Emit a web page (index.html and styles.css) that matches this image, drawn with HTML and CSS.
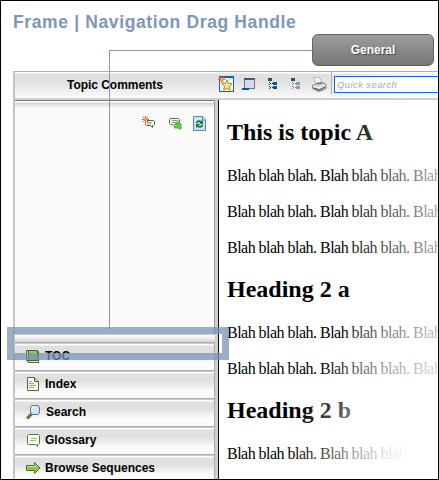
FILE: index.html
```html
<!DOCTYPE html>
<html lang="en">
<head>
<meta charset="utf-8">
<title>Frame | Navigation Drag Handle</title>
<link rel="stylesheet" href="styles.css">
</head>
<body>
<div class="page">
  <h1 class="title"><span>Frame | Navigation Drag Handle</span></h1>
  <div class="app">
    <header class="toolbar">
      <div class="pane-title"><span>Topic Comments</span></div>
      <div class="tools">
        <svg class="star" width="17" height="17" viewBox="0 0 17 17"><rect x="1.5" y="1.5" width="14" height="14" fill="#f3f7fa" stroke="#176795"/><path d="M2 2h13v2H2z" fill="#d6e8f5"/><path d="M1 1h15" stroke="#176795" stroke-width="2"/><path d="m9 4 1.5 3.4 3.6.3-2.7 2.6.8 3.9L9 12.1l-3.3 2.1.8-3.9-2.7-2.6 3.7-.3z" fill="#ffe29a" stroke="#b78a32"/><path d="M3.5 0v7M0 3.5h7M1 1l5 5M1 6l5-5" stroke="#ed4d18"/><circle cx="3.5" cy="3.5" r="1.7" fill="#ffb321"/></svg>
        <svg class="win" width="14" height="14" viewBox="0 0 14 14"><rect x="2.5" y="1.5" width="10" height="9" fill="#d3daea" stroke="#747783"/><path d="M2 1h11" stroke="#315e83" stroke-width="2"/><path d="M0 10h7v2H0z" fill="#075b8c"/></svg>
        <svg class="tree" width="10" height="12" viewBox="0 0 10 12"><path d="M0 0h4v3H0zM5 4h4v3H5zM5 8h4v3H5z" fill="#075b8c"/><path d="M1.5 4v7M2 5.5h3M2 9.5h3" fill="none" stroke="#333" stroke-dasharray="1 1"/></svg>
        <svg class="tree" width="10" height="12" viewBox="0 0 10 12"><path d="M0 0h4v3H0z" fill="#075b8c"/><path d="M5 4h4v3H5zM5 8h4v3H5z" fill="#999"/><path d="M1.5 4v7M2 5.5h3M2 9.5h3" fill="none" stroke="#888" stroke-dasharray="1 1"/></svg>
        <svg class="printer" width="15" height="15" viewBox="0 0 15 15"><path d="m1.5.5 6 0 3 6-6 1z" fill="#eef6ff" stroke="#a9c0dc"/><path d="m.5 8.500 4-2 6-1 3.500 2v4l-7 3-6.500-3z" fill="#d4d4d4" stroke="#777"/><path d="m1 9 6 2 6.500-3" fill="none" stroke="#fff"/><path d="m2 11 5 2 6-3" fill="none" stroke="#444"/><path d="m5 7 5-1" stroke="#555"/></svg>
        <div class="search">Quick search</div>
      </div>
    </header>
    <div class="main">
      <aside class="side">
        <div class="comments">
          <svg width="14" height="14" viewBox="0 0 14 14"><path d="M3.500 4.500h8l1 1v3l-1 1h-1v2l-2-2h-4l-1-1z" fill="#fff" stroke="#50634c"/><path d="M5 6.500h5M5 8h4" stroke="#8bac73"/><path d="M3.500 0v7M0 3.500h7M1 1l5 5M1 6l5-5" stroke="#e95822"/><circle cx="3.500" cy="3.500" r="1.500" fill="#ffad25"/></svg>
          <svg class="reply" width="14" height="14" viewBox="0 0 14 14"><path d="M1.500 2.500h8l1 1v4l-1 1h-4l-1 1-1-1h-2l-1-1v-4z" fill="#fff" stroke="#54744c"/><path d="M3 4.500h6M3 6.500h5" stroke="#71b34c"/><path d="M9.500 5.500 12 8v5h-1.500l-1-1h-4v-2h3V8h-2z" fill="#5dd540" stroke="#4cad37"/></svg>
          <svg class="refresh" width="14" height="16" viewBox="0 0 14 16"><path d="M.5.500h9l3 3v11H.5z" fill="#c9e3fa" stroke="#5a82b5"/><path d="M9.500 1v3h3" fill="#fff" stroke="#5a82b5"/><path d="M3.500 7c1-2 3-2.500 5-1M9.500 9c-1 2-3 2.500-5 1" fill="none" stroke="#137d29" stroke-width="1.800"/><path d="M10 4v4H6zM3 12V8h4z" fill="#137d29"/></svg>
        </div>
        <div class="handle"></div>
        <nav>
          <div class="item"><svg width="15" height="15" viewBox="0 0 15 15"><path d="M.5 1.500h2v11h-1l-1-1z" fill="#dce8cf" stroke="#3b6728"/><path d="M2.500 1.500h9v10h-9z" fill="#87ce56" stroke="#3b6728"/><path d="M11.500 2.500h1v11h-10l-1-2h10z" fill="#e4eddc" stroke="#3b6728"/></svg><span class="l1">TOC</span></div>
          <div class="item"><svg width="15" height="15" viewBox="0 0 15 15"><path d="M1.500.500h7l4 4v9h-11z" fill="#fafff7" stroke="#54654d"/><path d="M8.500 1v3.500h4" fill="#dbe8d4" stroke="#3f6d26"/><path d="M3 4.500h3M3 6.500h5M3 8.500h7M3 10.500h5" stroke="#80bd56"/></svg><span class="l2">Index</span></div>
          <div class="item"><svg width="15" height="15" viewBox="0 0 15 15"><path d="M6 8.500 1 13.500" stroke="#3f6425" stroke-width="3"/><path d="m5.500 9-4 4" stroke="#81b54c"/><rect x="4.500" y=".5" width="9" height="9" rx="2.500" fill="#c4e8ff" stroke="#66727a"/><path d="M6 5V2h4" fill="none" stroke="#fff"/></svg><span class="l3">Search</span></div>
          <div class="item"><svg width="15" height="15" viewBox="0 0 15 15"><path d="M2.500 1.500h10l1 1v8l-1 1h-1v2l-2-2h-7l-1-1v-8z" fill="#fafff7" stroke="#547148"/><path d="M5 5.500h6M4 7.500h6" stroke="#8acb62"/></svg><span class="l4">Glossary</span></div>
          <div class="item"><svg width="15" height="15" viewBox="0 0 15 15"><path d="M.5 4.500h8v-3l5.500 5.500-5.500 5.500v-3h-8z" fill="#8ac84b" stroke="#4c742c"/><path d="M1.500 5.500h8v-2" fill="none" stroke="#c3e89a"/></svg><span class="l5">Browse Sequences</span></div>
        </nav>
      </aside>
      <main class="content">
        <h2>This is topic A</h2>
        <p>Blah blah blah. Blah blah blah. Blah</p>
        <p>Blah blah blah. Blah blah blah. Blah</p>
        <p>Blah blah blah. Blah blah blah. Blah</p>
        <h2>Heading 2 a</h2>
        <p>Blah blah blah. Blah blah blah. Blah</p>
        <p>Blah blah blah. Blah blah blah. Blah</p>
        <h2>Heading 2 b</h2>
        <p>Blah blah blah. Blah blah blah</p>
      </main>
    </div>
  </div>
  <div class="connector"></div>
  <div class="callout">General</div>
  <div class="marker"></div>
</div>
</body>
</html>
```
FILE: styles.css
```css
* { box-sizing: border-box; }
body { margin: 0; font-family: "Liberation Sans", Arial, sans-serif; overflow: hidden; }
.page { position: relative; width: 439px; height: 480px; border: 1px solid #000; background: #fff; overflow: hidden; display: flex; flex-direction: column; }
.title { margin: 0; height: 70px; flex: none; padding: 11px 0 0 12px; font-size: 17.5px; line-height: 20px; color: #8096b5; white-space: nowrap; letter-spacing: 0.63px; }
.app { margin-left: 12px; height: 408px; flex: none; border-left: 2px solid #c3c7c3; display: flex; flex-direction: column; overflow: hidden; }
.toolbar { height: 29px; flex: none; display: flex; border-top: 1px solid #a9afa9; border-bottom: 2px solid #d0d0d0; background: linear-gradient(#fff 0 1px, #e0e0e0 2px 9px, #fafafa 100%); }
.pane-title { width: 203px; padding: 6px 3px 0 0; text-align: center; font-size: 12px; line-height: 15px; font-weight: bold; letter-spacing: -0.05px; }
.tools { flex: 1; display: flex; align-items: flex-start; background: linear-gradient(90deg, transparent 100px, rgba(255, 255, 255, 0.8)); }
.tools svg { flex: none; }
.star { margin-top: 4px; }
.win { margin: 6px 0 0 7px; }
.tree { margin: 6px 0 0 13px; }
.win + .tree { margin-left: 12px; }
.printer { margin: 5px 0 0 11px; }
.search { margin: 4px 0 0 7px; flex: 1; height: 17px; border: 1px solid #1760e8; border-right: 0; background: #fff; font-size: 9.5px; line-height: 15px; font-style: italic; color: #aaa; padding-left: 2px; white-space: nowrap; letter-spacing: 0.4px; position: relative; }
.search::before { content: ""; position: absolute; left: -4px; top: -5px; width: 1px; height: 22px; background: #b4b4b4; }
.main { flex: 1; min-height: 0; display: flex; }
.side { width: 204px; flex: none; border-right: 1px solid #111; box-shadow: inset -3px 0 #cfcfcf; padding-right: 3px; overflow: hidden; }
.comments { height: 234px; border-top: 1px solid #777; border-right: 1px solid #999; background: linear-gradient(#fff 0 1px, #d4d4d4 2px, #fafafa 7px); display: flex; justify-content: flex-end; padding: 15px 7px 0 0; }
.comments svg { display: block; }
.reply { margin-left: 13px; }
.refresh { margin-left: 10px; }
.handle { height: 8px; border-top: 1px solid #c7cac7; background: linear-gradient(#fff, #d4d4d4); }
.item { height: 28px; border-top: 1px solid #a9aea9; border-right: 1px solid #aaa; padding: 0 0 1px 11px; display: flex; align-items: center; gap: 4px; background: linear-gradient(#c8ccc8 0 1px, #fff 1px 2px, #e0e0e0 3px 10px, #fcfcfc 20px); font-size: 12px; font-weight: bold; white-space: nowrap; }
.item svg { flex: none; }
.l3 { padding-left: 1px; }
.content { flex: 1; min-width: 0; position: relative; overflow: hidden; background: #fff; padding: 18px 0 0 8px; font-family: "Liberation Serif", "Times New Roman", serif; }
.content::after { content: ""; position: absolute; inset: 0; background: radial-gradient(ellipse 150px 190px at 100% 100%, #fff 22%, rgba(255, 255, 255, 0) 100%), linear-gradient(90deg, rgba(255, 255, 255, 0) 120px, rgba(255, 255, 255, 0.64) 218px); }
.content h2 { margin: 0 0 21px; padding-top: 1px; font-size: 24px; line-height: 27px; white-space: nowrap; }
.content p { margin: 0 0 18px; font-size: 16px; line-height: 18px; white-space: nowrap; letter-spacing: -0.52px; }
.callout { position: absolute; left: 311px; top: 33px; width: 122px; height: 32px; border: 1px solid #626262; border-radius: 6px; background: linear-gradient(#9d9d9d, #858585 60%, #777); color: #fff; font-size: 12px; font-weight: bold; line-height: 31px; text-align: center; text-shadow: 1px 1px 1px #444; }
.connector { position: absolute; left: 108px; top: 49px; width: 203px; height: 279px; border-left: 1px solid #8399b5; border-top: 1px solid #8399b5; }
.marker { position: absolute; left: 6px; top: 326px; width: 222px; height: 33px; border: 7px solid rgba(123, 147, 178, 0.75); }
```
